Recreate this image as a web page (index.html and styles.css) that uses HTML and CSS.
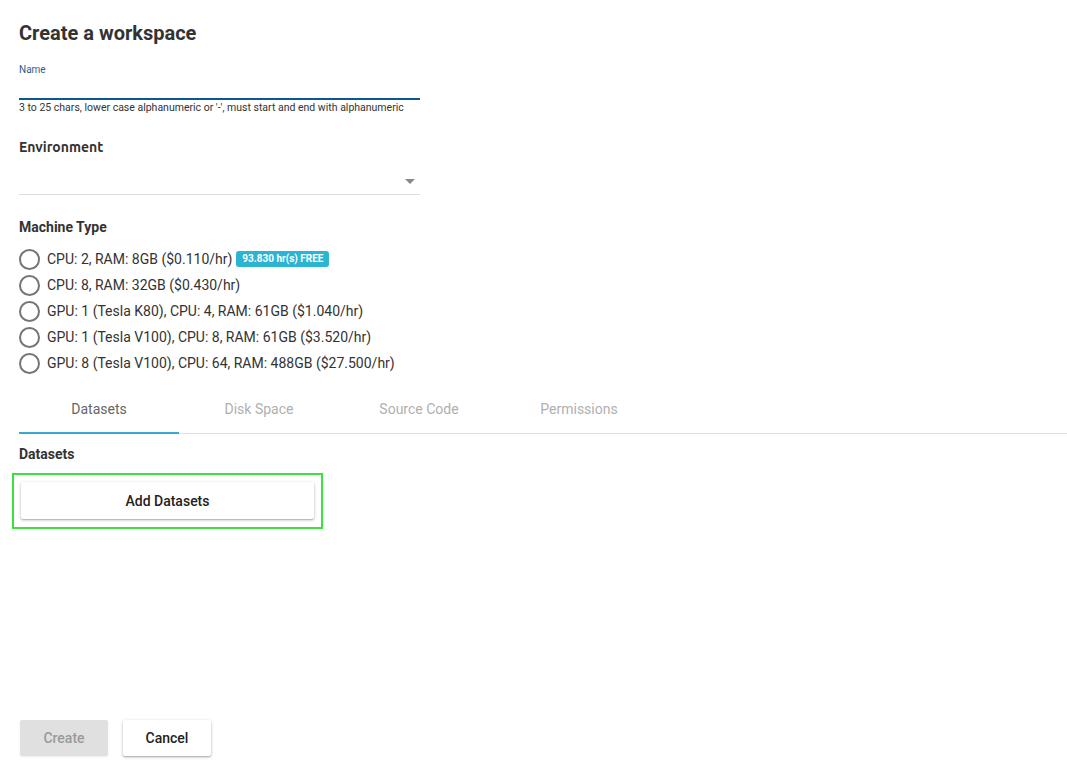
FILE: index.html
```html
<!DOCTYPE html>
<html>
<head>
<meta charset="utf-8">
<link rel="stylesheet" href="styles.css">
</head>
<body>
<div class="page">
  <h1 class="title">Create a workspace</h1>
  <div class="field">
    <label class="field-label">Name</label>
    <div class="field-input"></div>
    <div class="helper">3 to 25 chars, lower case alphanumeric or '-', must start and end with alphanumeric</div>
  </div>

  <h2 class="env-heading">Environment</h2>
  <div class="select">
    <span class="arrow"></span>
  </div>

  <h2 class="section-heading mt">Machine Type</h2>
  <div class="radios">
    <div class="radio-row"><span class="radio"></span><span>CPU: 2, RAM: 8GB ($0.110/hr)</span><span class="badge">93.830 hr(s) FREE</span></div>
    <div class="radio-row"><span class="radio"></span><span>CPU: 8, RAM: 32GB ($0.430/hr)</span></div>
    <div class="radio-row"><span class="radio"></span><span>GPU: 1 (Tesla K80), CPU: 4, RAM: 61GB ($1.040/hr)</span></div>
    <div class="radio-row"><span class="radio"></span><span>GPU: 1 (Tesla V100), CPU: 8, RAM: 61GB ($3.520/hr)</span></div>
    <div class="radio-row"><span class="radio"></span><span>GPU: 8 (Tesla V100), CPU: 64, RAM: 488GB ($27.500/hr)</span></div>
  </div>

  <div class="tabs">
    <div class="tab active">Datasets</div>
    <div class="tab">Disk Space</div>
    <div class="tab">Source Code</div>
    <div class="tab">Permissions</div>
  </div>

  <h2 class="section-heading ds">Datasets</h2>
  <div class="highlight">
    <button class="btn raised wide">Add Datasets</button>
  </div>

  <div class="spacer"></div>

  <div class="actions">
    <button class="btn disabled">Create</button>
    <button class="btn raised">Cancel</button>
  </div>
</div>
</body>
</html>
```

FILE: styles.css
```css
* { box-sizing: border-box; }
html, body { margin: 0; padding: 0; background: #fff; }
body {
  font-family: Roboto, "Liberation Sans", sans-serif;
  color: #333;
  width: 1067px;
  height: 766px;
  overflow: hidden;
}
.page {
  padding: 20px 0 0 19px;
  display: flex;
  flex-direction: column;
  height: 766px;
}
.title {
  margin: 0;
  font-size: 20px;
  font-weight: 700;
  line-height: 26px;
  color: #333;
}
.field {
  margin-top: 18px;
  width: 401px;
}
.field-label {
  display: block;
  font-size: 10px;
  line-height: 12px;
  color: #1f5f91;
}
.field-input {
  height: 24px;
  border-bottom: 2px solid #0d5690;
}
.helper {
  font-size: 10.5px;
  line-height: 13px;
  margin-top: 1px;
  color: #333;
  white-space: nowrap;
}
.env-heading {
  margin: 25px 0 0;
  font-family: "Ubuntu", "DejaVu Sans", sans-serif;
  font-size: 14px;
  font-weight: 700;
  line-height: 16px;
  color: #333;
}
.select {
  width: 401px;
  height: 40px;
  border-bottom: 1px solid #dcdcdc;
  position: relative;
}
.arrow {
  position: absolute;
  right: 5px;
  top: 24px;
  width: 0;
  height: 0;
  border-left: 5px solid transparent;
  border-right: 5px solid transparent;
  border-top: 5px solid #8a8a8a;
}
.section-heading {
  margin: 0;
  font-size: 14px;
  font-weight: 700;
  line-height: 17px;
  color: #333;
}
.section-heading.mt { margin-top: 24px; }
.radios {
  margin-top: 10px;
  display: flex;
  flex-direction: column;
}
.radio-row {
  display: flex;
  align-items: center;
  height: 26px;
  font-size: 14px;
  color: #333;
  white-space: nowrap;
}
.radio {
  width: 21px;
  height: 21px;
  border: 2px solid #757575;
  border-radius: 50%;
  margin-left: 0;
  margin-right: 7px;
  flex: none;
}
.badge {
  margin-left: 4px;
  background: #2bb5d3;
  color: #fff;
  font-size: 10px;
  font-weight: 700;
  line-height: 16px;
  padding: 0 6px 0 6px;
  border-radius: 3px;
}
.tabs {
  margin-top: 10px;
  display: flex;
  border-bottom: 1px solid #e0e0e0;
  height: 48px;
}
.tab {
  width: 160px;
  text-align: center;
  font-size: 14px;
  font-weight: 400;
  line-height: 46px;
  color: #b0b0b0;
  border-bottom: 2px solid transparent;
  height: 48px;
  margin-bottom: -1px;
}
.tab.active {
  color: #666;
  border-bottom-color: #3aa8d4;
}
.section-heading.ds { margin-top: 12px; }
.highlight {
  margin-top: 10px;
  margin-left: -7px;
  width: 311px;
  height: 56px;
  border: 2px solid #3ee03e;
  padding: 7px 7px 0 7px;
}
.btn {
  font-family: Roboto, "Liberation Sans", sans-serif;
  font-size: 14px;
  font-weight: 500;
  border: none;
  border-radius: 2px;
  height: 36px;
  width: 88px;
  padding: 0;
  background: #fff;
  color: #222;
  cursor: pointer;
}
.btn.raised {
  box-shadow: 0 1px 3px rgba(0,0,0,0.3), 0 1px 1px rgba(0,0,0,0.1);
}
.btn.wide {
  width: 293px;
  height: 37px;
}
.btn.disabled {
  background: #e0e0e0;
  color: #9a9a9a;
  box-shadow: 0 1px 2px rgba(0,0,0,0.08);
}
.spacer { flex: 1; }
.actions {
  display: flex;
  gap: 15px;
  padding-left: 1px;
  margin-bottom: 10px;
}
```
